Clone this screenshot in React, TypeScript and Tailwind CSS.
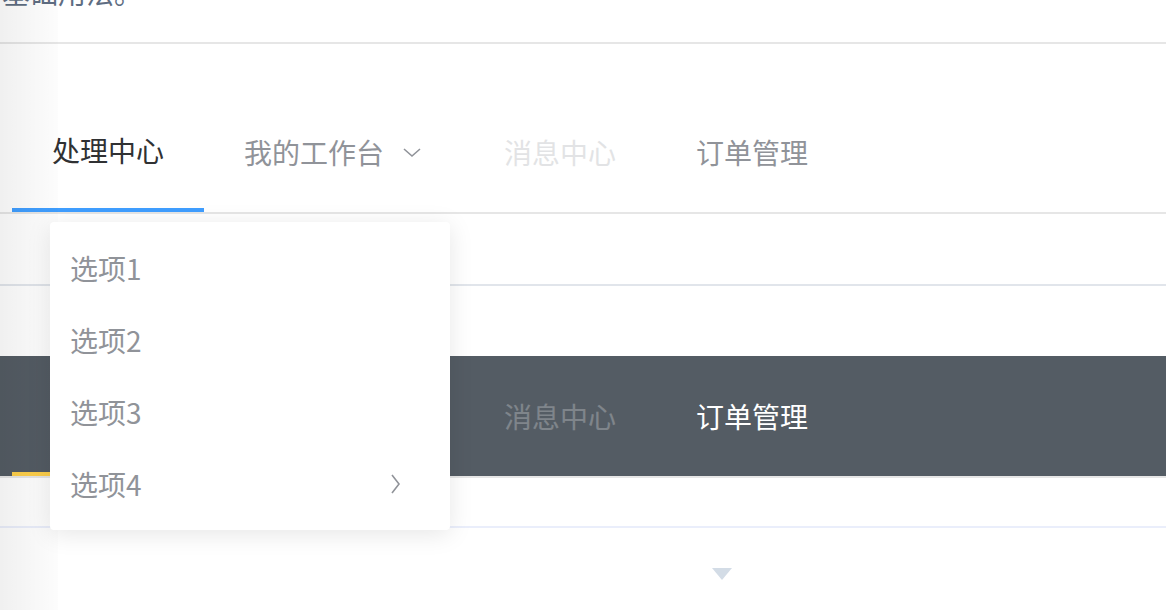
import type { ReactNode } from 'react'

const font = { fontFamily: '"Noto Sans CJK SC", "Liberation Sans", sans-serif' }

function ChevronDown({ className }: { className?: string }) {
  return (
    <svg viewBox="0 0 24 24" className={className} fill="none" stroke="currentColor" strokeWidth="1.6">
      <polyline points="4,9 12,16 20,9" />
    </svg>
  )
}

function ChevronRight({ className }: { className?: string }) {
  return (
    <svg viewBox="0 0 24 24" className={className} fill="none" stroke="currentColor" strokeWidth="1.6">
      <polyline points="8,3 15,12 8,21" />
    </svg>
  )
}

type ItemProps = {
  children: ReactNode
  className?: string
}

function Item({ children, className = '' }: ItemProps) {
  return <div className={`flex h-[120px] items-center px-[40px] text-[28px] ${className}`}>{children}</div>
}

function LightMenu() {
  return (
    <div className="flex border-b-2 border-[#e6e6e6] pl-[12px]">
      <Item className="border-b-4 border-[#409eff] text-[#303133]">处理中心</Item>
      <Item className="text-[#909399]">
        我的工作台
        <ChevronDown className="ml-[16px] h-[24px] w-[24px] text-[#909399]" />
      </Item>
      <Item className="text-[#909399] opacity-25">消息中心</Item>
      <Item className="text-[#909399]">订单管理</Item>
    </div>
  )
}

function DarkMenu() {
  return (
    <div className="flex border-b-2 border-[#e6e6e6] bg-[#545c64] pl-[12px]">
      <Item className="border-b-4 border-[#ffd04b] text-[#ffd04b]">处理中心</Item>
      <Item className="text-white">
        我的工作台
        <ChevronDown className="ml-[16px] h-[24px] w-[24px] text-white" />
      </Item>
      <Item className="text-white opacity-25">消息中心</Item>
      <Item className="text-white">订单管理</Item>
    </div>
  )
}

const options = ['选项1', '选项2', '选项3', '选项4']

export default function App() {
  return (
    <div className="relative h-[610px] w-[1166px] overflow-hidden bg-white" style={font}>
      {/* doc description, scrolled mostly out of view */}
      <div className="flex h-[42px] items-start overflow-hidden">
        <p className="-mt-[30px] -ml-[138px] shrink-0 whitespace-nowrap text-[28px] leading-[44px] text-[#5e6d82]">
          适用广泛的基础用法。
        </p>
      </div>
      <div className="h-[2px] bg-[#e6e6e6]" />

      <div className="mt-[48px]">
        <LightMenu />
      </div>

      <div className="mt-[70px] h-[2px] bg-[#e1e5eb]" />

      <div className="mt-[70px]">
        <DarkMenu />
      </div>

      <div className="mt-[48px] h-[2px] bg-[#eaeefb]" />

      {/* demo block toggle caret */}
      <div className="flex h-[92px] items-center pl-[712px]">
        <div className="h-0 w-0 border-x-[10px] border-t-[12px] border-x-transparent border-t-[#d3dce6]" />
      </div>

      {/* left edge shadow */}
      <div className="pointer-events-none absolute inset-y-0 left-0 w-[58px] bg-gradient-to-r from-black/[0.06] to-black/[0.01]" />

      {/* submenu popup */}
      <div className="absolute left-[50px] top-[222px] w-[400px] rounded-[4px] bg-white py-[10px] shadow-[0_4px_24px_rgba(0,0,0,0.1)]">
        {options.map((o, i) => (
          <div key={o} className="flex h-[72px] items-center justify-between px-[20px] text-[28px] text-[#909399]">
            <span>{o}</span>
            {i === 3 && <ChevronRight className="mr-[22px] h-[24px] w-[24px] text-[#909399]" />}
          </div>
        ))}
      </div>
    </div>
  )
}
